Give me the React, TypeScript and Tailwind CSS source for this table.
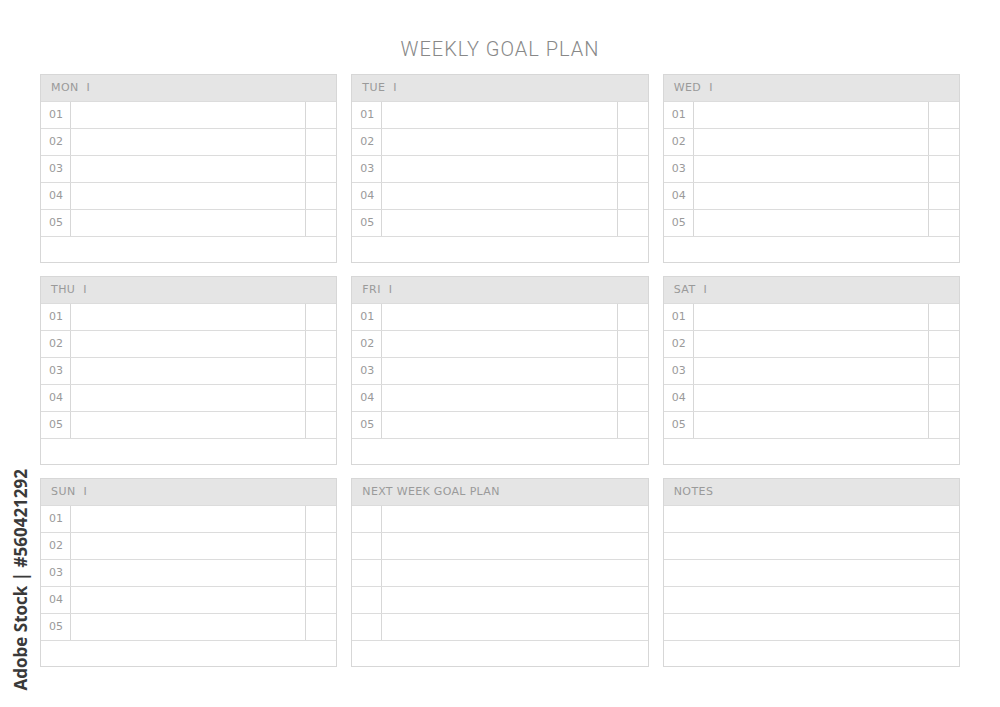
import React from 'react';

const days = ['MON', 'TUE', 'WED', 'THU', 'FRI', 'SAT', 'SUN'];
const nums = ['01', '02', '03', '04', '05'];

function DayPanel({ day }: { day: string }) {
  return (
    <div className="border border-[#d7d7d7] bg-white">
      <div className="h-[26px] bg-[#e5e5e5] flex items-center pl-[10px] text-[11px] tracking-[0.04em] text-[#9a9a9a]">
        {day}&nbsp;&nbsp;I
      </div>
      {nums.map((n) => (
        <div key={n} className="h-[27px] border-t border-[#dcdcdc] flex">
          <div className="w-[30px] border-r border-[#d7d7d7] flex items-center pl-[8px] text-[11px] text-[#9a9a9a]">{n}</div>
          <div className="flex-1 border-r border-[#d7d7d7]"></div>
          <div className="w-[30px]"></div>
        </div>
      ))}
      <div className="h-[26px] border-t border-[#dcdcdc]"></div>
    </div>
  );
}

function NextWeekPanel() {
  return (
    <div className="border border-[#d7d7d7] bg-white">
      <div className="h-[26px] bg-[#e5e5e5] flex items-center pl-[10px] text-[11px] tracking-[0.03em] text-[#9a9a9a]">
        NEXT WEEK GOAL PLAN
      </div>
      {nums.map((n) => (
        <div key={n} className="h-[27px] border-t border-[#dcdcdc] flex">
          <div className="w-[30px] border-r border-[#d7d7d7]"></div>
          <div className="flex-1"></div>
        </div>
      ))}
      <div className="h-[26px] border-t border-[#dcdcdc]"></div>
    </div>
  );
}

function NotesPanel() {
  return (
    <div className="border border-[#d7d7d7] bg-white">
      <div className="h-[26px] bg-[#e5e5e5] flex items-center pl-[10px] text-[11px] tracking-[0.04em] text-[#9a9a9a]">
        NOTES
      </div>
      {[0, 1, 2, 3, 4].map((i) => (
        <div key={i} className="h-[27px] border-t border-[#dcdcdc]"></div>
      ))}
      <div className="h-[26px] border-t border-[#dcdcdc]"></div>
    </div>
  );
}

export default function App() {
  return (
    <div
      className="relative w-[1000px] h-[707px] bg-white overflow-hidden"
      style={{ fontFamily: '"DejaVu Sans", "Liberation Sans", sans-serif' }}
    >
      {/* Title */}
      <div
        className="pt-[37px] mb-[13px] h-[24px] box-content text-center text-[20px] leading-[24px] font-light tracking-[0.05em] text-[#888888]"
        style={{ fontFamily: 'Roboto, "Liberation Sans", sans-serif' }}
      >
        WEEKLY GOAL PLAN
      </div>

      <div className="px-[40px] grid grid-cols-3 gap-x-[14px] gap-y-[13px]">
        {days.map((d) => (
          <DayPanel key={d} day={d} />
        ))}
        <NextWeekPanel />
        <NotesPanel />
      </div>

      {/* Stock id on the left edge */}
      <div
        className="absolute left-[12px] bottom-[17px] [writing-mode:vertical-rl] rotate-180 text-[17px] font-bold text-[#3a3a3a] leading-none"
        style={{ fontFamily: '"Open Sans", "Noto Sans", sans-serif' }}
      >
        Adobe Stock | #560421292
      </div>
    </div>
  );
}
